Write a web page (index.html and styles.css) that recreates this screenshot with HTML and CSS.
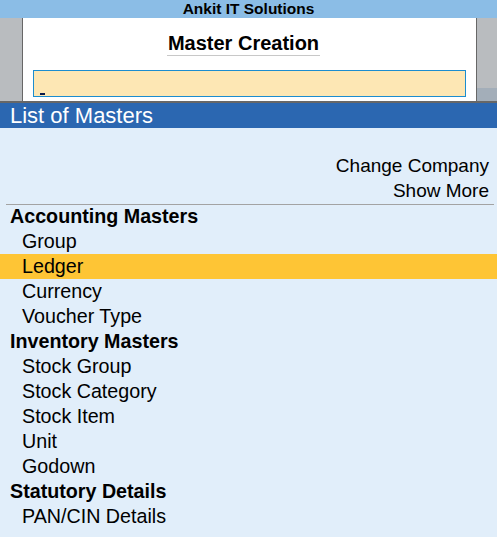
FILE: index.html
```html
<!DOCTYPE html>
<html>
<head>
<meta charset="utf-8">
<link rel="stylesheet" href="styles.css">
</head>
<body>
<div class="titlebar">Ankit IT Solutions</div>
<div class="top">
  <div class="side side-left"></div>
  <div class="panel">
    <div class="panel-title"><span class="panel-title-text">Master Creation</span></div>
    <div class="input"><span class="cursor"></span></div>
  </div>
  <div class="side side-right"><div class="side-right-bottom"></div></div>
</div>
<div class="list-header">List of Masters</div>
<div class="list">
  <div class="action">Change Company</div>
  <div class="action">Show More</div>
  <div class="sep"></div>
  <div class="group">Accounting Masters</div>
  <div class="item">Group</div>
  <div class="item selected">Ledger</div>
  <div class="item">Currency</div>
  <div class="item">Voucher Type</div>
  <div class="group">Inventory Masters</div>
  <div class="item">Stock Group</div>
  <div class="item">Stock Category</div>
  <div class="item">Stock Item</div>
  <div class="item">Unit</div>
  <div class="item">Godown</div>
  <div class="group">Statutory Details</div>
  <div class="item">PAN/CIN Details</div>
</div>
</body>
</html>
```

FILE: styles.css
```css
html, body {
  margin: 0;
  padding: 0;
}
body {
  font-family: "Liberation Sans", Arial, sans-serif;
  background: #e1eefa;
  color: #000;
  width: 497px;
  height: 537px;
  overflow: hidden;
}
.titlebar {
  height: 18px;
  line-height: 18px;
  background: #8bbde6;
  text-align: center;
  font-weight: bold;
  font-size: 15.5px;
}
.top {
  display: flex;
  height: 83px;
  border-bottom: 2px solid #676767;
}
.side {
  background: #b9bcbf;
}
.side-left {
  width: 22px;
  border-right: 1px solid #676767;
}
.side-right {
  width: 20px;
  border-left: 1px solid #676767;
  display: flex;
  flex-direction: column;
  justify-content: flex-end;
}
.side-right-bottom {
  height: 13px;
  background: #a3aeb9;
}
.panel {
  flex: 1;
  background: #fff;
  padding: 14px 10px 0 10px;
}
.panel-title {
  text-align: center;
  line-height: 23px;
  height: 24px;
  padding-right: 12px;
}
.panel-title-text {
  display: inline-block;
  font-weight: bold;
  font-size: 20px;
  border-bottom: 1px solid #c8c8c8;
  padding: 0 1px;
}
.input {
  margin-top: 14px;
  height: 27px;
  box-sizing: border-box;
  background: #fde7b4;
  border: 1px solid #1c8dcf;
  display: flex;
  align-items: flex-end;
  padding: 0 0 1px 6px;
}
.cursor {
  width: 5px;
  height: 2px;
  background: #0b1a4a;
}
.list-header {
  height: 25px;
  line-height: 25px;
  background: #2b67b1;
  color: #fff;
  font-size: 22px;
  padding-left: 10px;
}
.list {
  padding-top: 26px;
  font-size: 19.7px;
}
.action {
  height: 25px;
  line-height: 24px;
  text-align: right;
  padding-right: 8px;
  font-size: 19px;
}
.sep {
  border-top: 1px solid #a3a3a3;
  margin: 0 3px -1px 6px;
  position: relative;
}
.group {
  height: 25px;
  line-height: 24px;
  font-weight: bold;
  padding-left: 10px;
}
.item {
  height: 25px;
  line-height: 24px;
  padding-left: 22px;
}
.item.selected {
  background: #fec535;
}
```
